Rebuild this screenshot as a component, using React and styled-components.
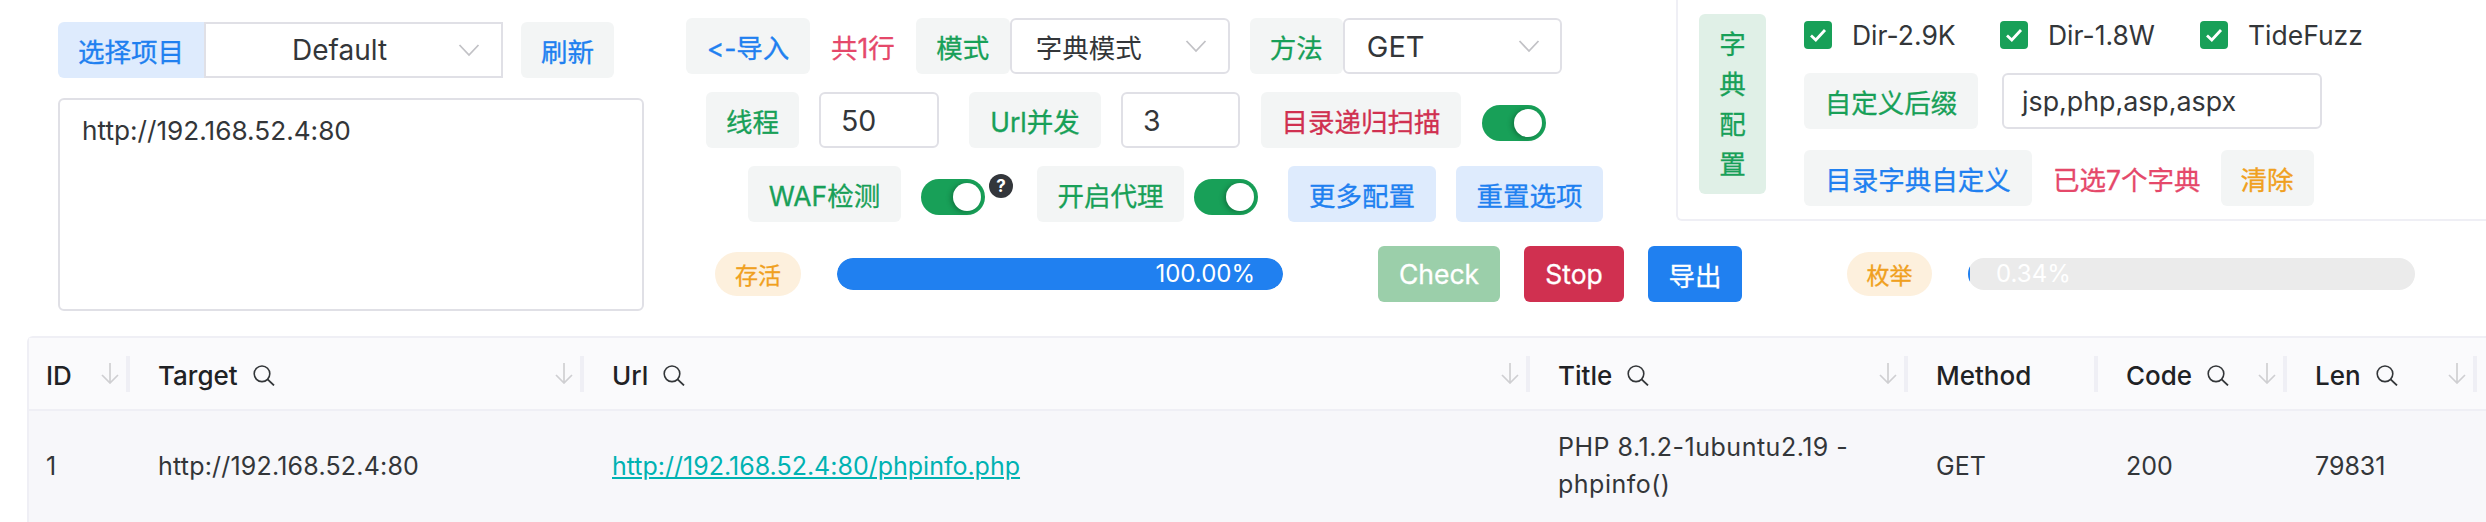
import React from "react";
import styled, { createGlobalStyle } from "styled-components";

const GREEN = "#18a058";
const BLUE = "#2080f0";
const RED = "#d03050";
const PINK = "#e5486a";
const ORANGE = "#f0a020";
const INK = "#333639";
const LINE = "#e0e0e6";
const SOFT = "#f3f5f5";

const Global = createGlobalStyle`
  html, body { margin: 0; padding: 0; background: #fff; overflow: hidden; }
  body {
    font-family: Inter, "Noto Sans CJK SC", sans-serif;
    font-size: 26px;
    color: ${INK};
    font-variant-ligatures: none;
    font-feature-settings: "calt" 0, "liga" 0;
  }
`;

const Page = styled.div`
  width: 2486px;
  height: 522px;
  overflow: hidden;
`;

const Top = styled.div`
  display: flex;
  align-items: flex-start;
  height: 336px;
  padding-left: 58px;
  box-sizing: border-box;
`;

const LeftColumn = styled.div`
  display: flex;
  flex-direction: column;
  width: 586px;
  padding-top: 22px;
  margin-right: 42px;
  flex: none;
`;

const ProjectRow = styled.div`
  display: flex;
  align-items: center;
`;

const Button = styled.div`
  display: inline-flex;
  align-items: center;
  justify-content: center;
  flex: none;
  box-sizing: border-box;
  height: 56px;
  width: ${(p) => (p.$w ? `${p.$w}px` : "auto")};
  margin-left: ${(p) => p.$ml || 0}px;
  border-radius: ${(p) => p.$radius || "6px"};
  background: ${(p) => p.$bg || SOFT};
  color: ${(p) => p.$color || GREEN};
  font-size: 26.5px;
  -webkit-text-stroke: 0.3px currentColor;
  white-space: nowrap;
`;

const Field = styled.div`
  display: flex;
  align-items: center;
  flex: none;
  box-sizing: border-box;
  height: 56px;
  width: ${(p) => p.$w}px;
  margin-left: ${(p) => p.$ml || 0}px;
  padding: 0 ${(p) => p.$pr || 24}px 0 ${(p) => p.$pl || 24}px;
  border: 2px solid ${LINE};
  border-radius: ${(p) => p.$radius || "6px"};
  background: #fff;
  color: ${INK};
  font-size: ${(p) => p.$fs || 26.5}px;
  white-space: nowrap;
`;

const FieldText = styled.span`
  flex: 1;
  text-align: ${(p) => p.$align || "left"};
`;

const TextArea = styled.div`
  box-sizing: border-box;
  width: 586px;
  height: 213px;
  margin-top: 20px;
  padding: 11px 22px;
  border: 2px solid ${LINE};
  border-radius: 6px;
  font-size: 26.2px;
  line-height: 40px;
`;

const RightColumn = styled.div`
  flex: 1;
  min-width: 0;
  display: flex;
  flex-direction: column;
`;

const ConfigBlock = styled.div`
  display: flex;
  align-items: flex-start;
  height: 222px;
`;

const OptionRows = styled.div`
  width: 990px;
  flex: none;
  display: flex;
  flex-direction: column;
  gap: 18px;
  padding-top: 18px;
`;

const OptionRow = styled.div`
  display: flex;
  align-items: center;
  height: 56px;
  padding-left: ${(p) => p.$indent || 0}px;
`;

const Note = styled.span`
  flex: none;
  margin-left: ${(p) => p.$ml || 0}px;
  color: ${PINK};
  font-size: 26.5px;
  -webkit-text-stroke: 0.3px currentColor;
  white-space: nowrap;
`;

const Toggle = styled.span`
  position: relative;
  flex: none;
  display: block;
  width: 64px;
  height: 36px;
  margin-left: ${(p) => p.$ml || 0}px;
  margin-top: ${(p) => p.$mt || 6}px;
  border-radius: 18px;
  background: ${GREEN};
  &::after {
    content: "";
    position: absolute;
    top: 4px;
    right: 4px;
    width: 28px;
    height: 28px;
    border-radius: 50%;
    background: #fff;
    box-shadow: -2px 1px 5px rgba(0, 40, 20, 0.35);
  }
`;

const Hint = styled.span`
  flex: none;
  display: flex;
  align-items: center;
  justify-content: center;
  width: 24px;
  height: 24px;
  margin-left: 4px;
  margin-top: -16px;
  border-radius: 50%;
  background: #33363b;
  color: #fff;
  font-size: 17px;
  font-weight: 700;
  line-height: 1;
`;

const Panel = styled.div`
  flex: 1;
  box-sizing: border-box;
  height: 222px;
  margin-top: -1px;
  display: flex;
  align-items: flex-start;
  padding: 15px 0 0 21px;
  border-left: 2px solid #efeff5;
  border-bottom: 2px solid #efeff5;
  border-bottom-left-radius: 6px;
`;

const SideLabel = styled.div`
  flex: none;
  box-sizing: border-box;
  width: 67px;
  height: 180px;
  display: flex;
  flex-direction: column;
  align-items: center;
  justify-content: space-around;
  padding: 10px 0;
  border-radius: 6px;
  background: #e0f0e7;
  color: ${GREEN};
  font-size: 26.5px;
  -webkit-text-stroke: 0.3px currentColor;
  line-height: 1;
`;

const PanelBody = styled.div`
  display: flex;
  flex-direction: column;
  margin-left: 38px;
`;

const CheckRow = styled.div`
  display: flex;
  align-items: center;
  height: 28px;
  margin-top: 7px;
`;

const CheckItem = styled.label`
  display: flex;
  align-items: center;
  width: ${(p) => p.$w}px;
  font-size: 26.5px;
  white-space: nowrap;
`;

const Box = styled.span`
  flex: none;
  display: flex;
  align-items: center;
  justify-content: center;
  width: 28px;
  height: 28px;
  margin-right: 20px;
  border-radius: 4px;
  background: ${GREEN};
`;

const PanelRow = styled.div`
  display: flex;
  align-items: center;
  height: 56px;
  margin-top: ${(p) => p.$mt}px;
`;

const StatusRow = styled.div`
  display: flex;
  align-items: center;
  height: 56px;
  margin-top: 24px;
  padding-left: 29px;
`;

const Pill = styled.span`
  flex: none;
  display: flex;
  align-items: center;
  justify-content: center;
  width: ${(p) => p.$w}px;
  height: 44px;
  margin-left: ${(p) => p.$ml || 0}px;
  border-radius: 22px;
  background: #fdf0dd;
  color: ${ORANGE};
  font-size: 23px;
  -webkit-text-stroke: 0.3px currentColor;
`;

const Track = styled.div`
  position: relative;
  flex: none;
  width: ${(p) => p.$w}px;
  height: 32px;
  margin-left: 36px;
  border-radius: 16px;
  background: #ebebeb;
  overflow: hidden;
`;

const Fill = styled.div`
  height: 100%;
  border-radius: 16px;
  background: ${BLUE};
`;

const BarLabel = styled.span`
  position: absolute;
  top: 0;
  line-height: 32px;
  ${(p) => (p.$end ? "right: 28px;" : "left: 28px;")}
  color: #fff;
  font-size: 24px;
`;

const Table = styled.div`
  margin-left: 27px;
  width: 2459px;
  box-sizing: border-box;
  border-top: 2px solid #efeff5;
  border-left: 2px solid #efeff5;
  border-top-left-radius: 6px;
`;

const COLUMNS = "101px 454px 946px 378px 190px 189px 190px 1fr";

const HeadRow = styled.div`
  display: grid;
  grid-template-columns: ${COLUMNS};
  height: 71px;
  background: #fafafc;
  border-bottom: 2px solid #efeff5;
`;

const HeadCell = styled.div`
  position: relative;
  display: flex;
  align-items: center;
  box-sizing: border-box;
  min-width: 0;
  padding: 3px 0 0 ${(p) => p.$pl || 28}px;
  font-weight: 500;
  font-size: 26px;
  color: #1f2225;
  white-space: nowrap;
  ${(p) =>
    p.$last
      ? ""
      : `&::after {
    content: "";
    position: absolute;
    right: 0;
    top: 18px;
    width: 4px;
    height: 36px;
    background: #efeff5;
  }`}
`;

const SearchMark = styled.svg`
  flex: none;
  margin-left: 15px;
`;

const SortMark = styled.svg`
  position: absolute;
  right: 11px;
  top: 25px;
`;

const BodyRow = styled.div`
  display: grid;
  grid-template-columns: ${COLUMNS};
  height: 116px;
  background: #f7f7fa;
`;

const BodyCell = styled.div`
  display: flex;
  align-items: center;
  box-sizing: border-box;
  min-width: 0;
  padding: 0 ${(p) => p.$pr || 0}px 6px ${(p) => p.$pl || 28}px;
  font-size: 25px;
  letter-spacing: ${(p) => p.$ls || 0}px;
  line-height: 37px;
  color: ${INK};
`;

const Link = styled.a`
  color: #00b2b2;
  text-decoration: underline;
  white-space: nowrap;
`;

const Chevron = () => (
  <svg width="22" height="14" viewBox="0 0 22 14" fill="none">
    <path d="M1.5 2 L11 12 L20.5 2" stroke="#c2c2c6" strokeWidth="1.8" />
  </svg>
);

const Tick = () => (
  <svg width="18" height="14" viewBox="0 0 18 14" fill="none">
    <path d="M2 7.5 L6.8 12 L16 2" stroke="#fff" strokeWidth="2.8" />
  </svg>
);

const Search = () => (
  <SearchMark width="22" height="21" viewBox="0 0 22 21" fill="none">
    <circle cx="9" cy="8.8" r="7.8" stroke="#333639" strokeWidth="1.6" />
    <path d="M14.6 14.4 L21 20.4" stroke="#333639" strokeWidth="1.8" />
  </SearchMark>
);

const Sort = () => (
  <SortMark width="18" height="21" viewBox="0 0 18 21" fill="none">
    <path d="M9 0 V20 M1 12 L9 20 L17 12" stroke="#cfcfd2" strokeWidth="1.7" />
  </SortMark>
);

const heads = [
  { label: "ID", sort: true, pl: 17 },
  { label: "Target", search: true, sort: true },
  { label: "Url", search: true, sort: true },
  { label: "Title", search: true, sort: true },
  { label: "Method" },
  { label: "Code", search: true, sort: true },
  { label: "Len", search: true, sort: true },
];

export default function App() {
  return (
    <Page>
      <Global />
      <Top>
        <LeftColumn>
          <ProjectRow>
            <Button $w={146} $bg="#deebfd" $color={BLUE} $radius="6px 0 0 6px">
              选择项目
            </Button>
            <Field $w={299} $radius="0" $fs={28} $pl={15} $pr={21}>
              <FieldText $align="center">Default</FieldText>
              <Chevron />
            </Field>
            <Button $w={93} $ml={18} $color={BLUE}>
              刷新
            </Button>
          </ProjectRow>
          <TextArea>http://192.168.52.4:80</TextArea>
        </LeftColumn>

        <RightColumn>
          <ConfigBlock>
            <OptionRows>
              <OptionRow>
                <Button $w={124} $color={BLUE}>
                  &lt;-导入
                </Button>
                <Note $ml={21}>共1行</Note>
                <Button $w={94} $ml={21}>
                  模式
                </Button>
                <Field $w={220} $pr={21}>
                  <FieldText>字典模式</FieldText>
                  <Chevron />
                </Field>
                <Button $w={93} $ml={20}>
                  方法
                </Button>
                <Field $w={219} $pl={22} $pr={20} $fs={29}>
                  <FieldText>GET</FieldText>
                  <Chevron />
                </Field>
              </OptionRow>
              <OptionRow $indent={20}>
                <Button $w={93}>线程</Button>
                <Field $w={120} $ml={20} $pl={20} $fs={28.5}>
                  50
                </Field>
                <Button $w={132} $ml={30}>
                  Url并发
                </Button>
                <Field $w={119} $ml={20} $pl={20} $fs={28.5}>
                  3
                </Field>
                <Button $w={200} $ml={21} $color={RED}>
                  目录递归扫描
                </Button>
                <Toggle $ml={21} />
              </OptionRow>
              <OptionRow $indent={62}>
                <Button $w={153}>WAF检测</Button>
                <Toggle $ml={20} />
                <Hint>?</Hint>
                <Button $w={147} $ml={24}>
                  开启代理
                </Button>
                <Toggle $ml={10} />
                <Button $w={148} $ml={30} $bg="#deebfd" $color={BLUE}>
                  更多配置
                </Button>
                <Button $w={147} $ml={20} $bg="#deebfd" $color={BLUE}>
                  重置选项
                </Button>
              </OptionRow>
            </OptionRows>

            <Panel>
              <SideLabel>
                <span>字</span>
                <span>典</span>
                <span>配</span>
                <span>置</span>
              </SideLabel>
              <PanelBody>
                <CheckRow>
                  <CheckItem $w={196}>
                    <Box>
                      <Tick />
                    </Box>
                    Dir-2.9K
                  </CheckItem>
                  <CheckItem $w={200}>
                    <Box>
                      <Tick />
                    </Box>
                    Dir-1.8W
                  </CheckItem>
                  <CheckItem $w={180}>
                    <Box>
                      <Tick />
                    </Box>
                    TideFuzz
                  </CheckItem>
                </CheckRow>
                <PanelRow $mt={24}>
                  <Button $w={174}>自定义后缀</Button>
                  <Field $w={320} $ml={24} $pl={18} $fs={26.8}>
                    jsp,php,asp,aspx
                  </Field>
                </PanelRow>
                <PanelRow $mt={21}>
                  <Button $w={228} $color={BLUE}>
                    目录字典自定义
                  </Button>
                  <Note $ml={21}>已选7个字典</Note>
                  <Button $w={93} $ml={20} $color={ORANGE}>
                    清除
                  </Button>
                </PanelRow>
              </PanelBody>
            </Panel>
          </ConfigBlock>

          <StatusRow>
            <Pill $w={86}>存活</Pill>
            <Track $w={446}>
              <Fill style={{ width: "100%" }} />
              <BarLabel $end>100.00%</BarLabel>
            </Track>
            <Button $w={122} $ml={95} $bg="#9bcfaa" $color="#fff">
              Check
            </Button>
            <Button $w={100} $ml={24} $bg={RED} $color="#fff">
              Stop
            </Button>
            <Button $w={94} $ml={24} $bg={BLUE} $color="#fff">
              导出
            </Button>
            <Pill $w={85} $ml={105}>
              枚举
            </Pill>
            <Track $w={447}>
              <Fill style={{ width: "0.34%" }} />
              <BarLabel>0.34%</BarLabel>
            </Track>
          </StatusRow>
        </RightColumn>
      </Top>

      <Table>
        <HeadRow>
          {heads.map((h) => (
            <HeadCell key={h.label} $pl={h.pl}>
              {h.label}
              {h.search && <Search />}
              {h.sort && <Sort />}
            </HeadCell>
          ))}
          <HeadCell $last />
        </HeadRow>
        <BodyRow>
          <BodyCell $pl={17}>1</BodyCell>
          <BodyCell $ls={0.2}>http://192.168.52.4:80</BodyCell>
          <BodyCell>
            <Link>http://192.168.52.4:80/phpinfo.php</Link>
          </BodyCell>
          <BodyCell $pr={30} $ls={0.5}>
            PHP 8.1.2-1ubuntu2.19 - phpinfo()
          </BodyCell>
          <BodyCell>GET</BodyCell>
          <BodyCell>200</BodyCell>
          <BodyCell>79831</BodyCell>
          <BodyCell />
        </BodyRow>
      </Table>
    </Page>
  );
}
